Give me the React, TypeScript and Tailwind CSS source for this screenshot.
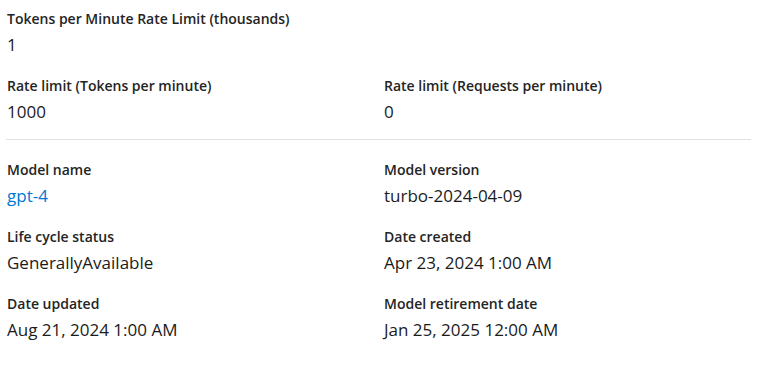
import React from "react";

function Field({ label, value, link }: { label: string; value: string; link?: boolean }) {
  return (
    <div className="flex flex-col">
      <div className="h-[20px] text-[14px] leading-[20px] font-semibold text-[#242424]">{label}</div>
      <div className={`mt-[5px] h-[22px] text-[17px] leading-[22px] ${link ? "text-[#0078d4]" : "text-[#1b1b1b]"}`}>{value}</div>
    </div>
  );
}

export default function App() {
  return (
    <div
      className="w-[764px] h-[370px] bg-white pl-[7px] pt-[9px]"
      style={{ fontFamily: '"Segoe UI", "Open Sans", "Noto Sans", sans-serif' }}
    >
      <div className="flex flex-col gap-[20px] w-[745px]">
        <Field label="Tokens per Minute Rate Limit (thousands)" value="1" />
        <div className="grid grid-cols-[377px_1fr]">
          <Field label="Rate limit (Tokens per minute)" value="1000" />
          <Field label="Rate limit (Requests per minute)" value="0" />
        </div>
      </div>
      <div className="mt-[16px] ml-[-1px] w-[745px] h-px bg-[#e0e0e0]" />
      <div className="mt-[20px] grid grid-cols-[377px_1fr] gap-y-[20px]">
        <Field label="Model name" value="gpt-4" link />
        <Field label="Model version" value="turbo-2024-04-09" />
        <Field label="Life cycle status" value="GenerallyAvailable" />
        <Field label="Date created" value="Apr 23, 2024 1:00 AM" />
        <Field label="Date updated" value="Aug 21, 2024 1:00 AM" />
        <Field label="Model retirement date" value="Jan 25, 2025 12:00 AM" />
      </div>
    </div>
  );
}
